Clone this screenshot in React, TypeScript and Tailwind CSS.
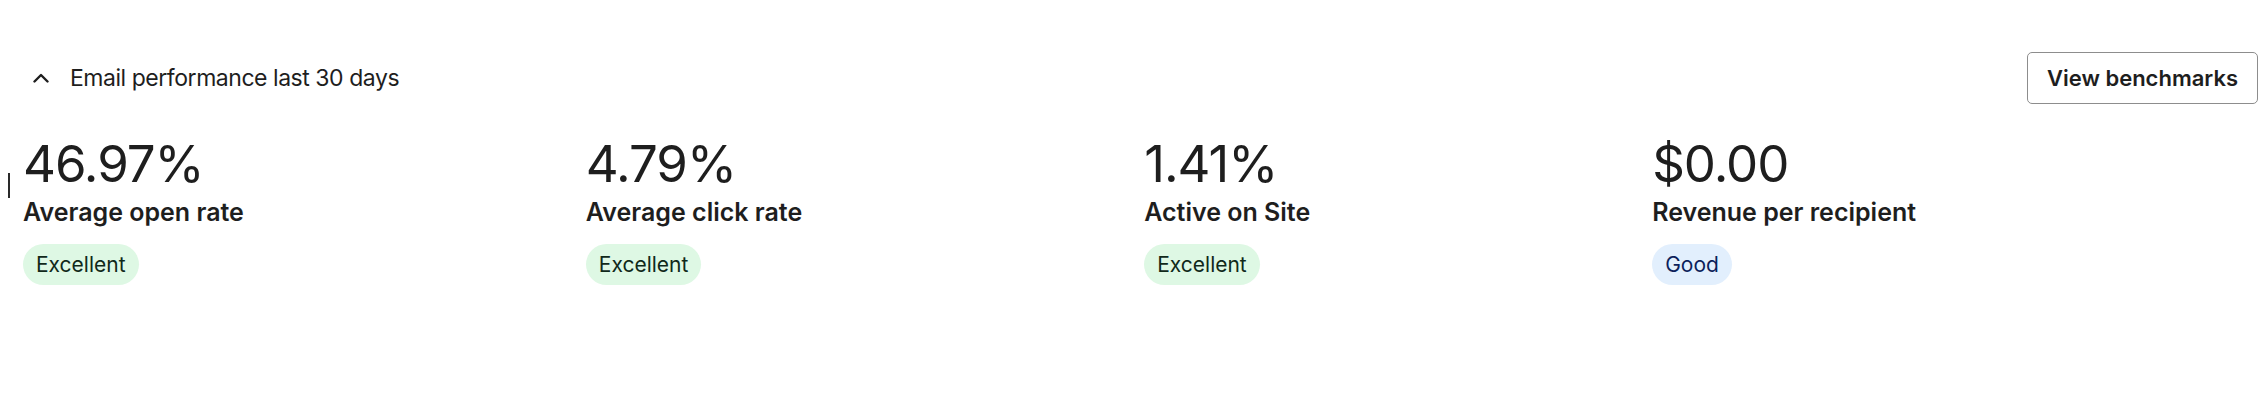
import React from 'react';

type Metric = {
  value: string;
  label: string;
  rating: 'Excellent' | 'Good';
};

const metrics: Metric[] = [
  { value: '46.97%', label: 'Average open rate', rating: 'Excellent' },
  { value: '4.79%', label: 'Average click rate', rating: 'Excellent' },
  { value: '1.41%', label: 'Active on Site', rating: 'Excellent' },
  { value: '$0.00', label: 'Revenue per recipient', rating: 'Good' },
];

function RatingBadge({ rating }: { rating: Metric['rating'] }) {
  if (rating === 'Good') {
    return (
      <span className="inline-flex h-[41px] items-center rounded-full bg-[#e2effd] px-[13px] text-[21px] text-[#0c1f5b]">
        Good
      </span>
    );
  }
  return (
    <span className="inline-flex h-[41px] items-center rounded-full bg-[#def8e4] px-[13px] text-[21px] text-[#10291a]">
      Excellent
    </span>
  );
}

export default function App() {
  return (
    <div
      className="relative h-[406px] w-full bg-white text-[#1e1e1e]"
      style={{ fontFamily: 'Inter, "Noto Sans", sans-serif' }}
    >
      {/* header */}
      <div className="flex items-center justify-between pl-[33px] pr-[8px] pt-[52px]">
        <button className="flex items-center gap-[21px]">
          <svg width="16" height="10" viewBox="0 0 16 10" fill="none" stroke="currentColor" strokeWidth={2.4} strokeLinecap="round" strokeLinejoin="round">
            <polyline points="1.5,8.5 8,2 14.5,8.5" />
          </svg>
          <span className="text-[23px] tracking-[-0.02em]">Email performance last 30 days</span>
        </button>
        <button className="flex h-[52px] w-[231px] items-center justify-center rounded-[5px] border border-[#8d8d8d] text-[22px] font-semibold">
          View benchmarks
        </button>
      </div>

      {/* text cursor */}
      <div className="absolute left-[8px] top-[173px] h-[25px] w-[2px] bg-[#2a2a2a]" />

      {/* metrics */}
      <div className="flex pl-[23px] pr-[8px] pt-[34px]">
        {metrics.map((m) => (
          <div key={m.label} className="flex flex-auto flex-col items-start">
            <div className="text-[51px] leading-none tracking-[-0.02em]">{m.value}</div>
            <div className="mt-[8px] text-[25px] font-semibold leading-[1.2]">{m.label}</div>
            <div className="mt-[17px]">
              <RatingBadge rating={m.rating} />
            </div>
          </div>
        ))}
      </div>
    </div>
  );
}
